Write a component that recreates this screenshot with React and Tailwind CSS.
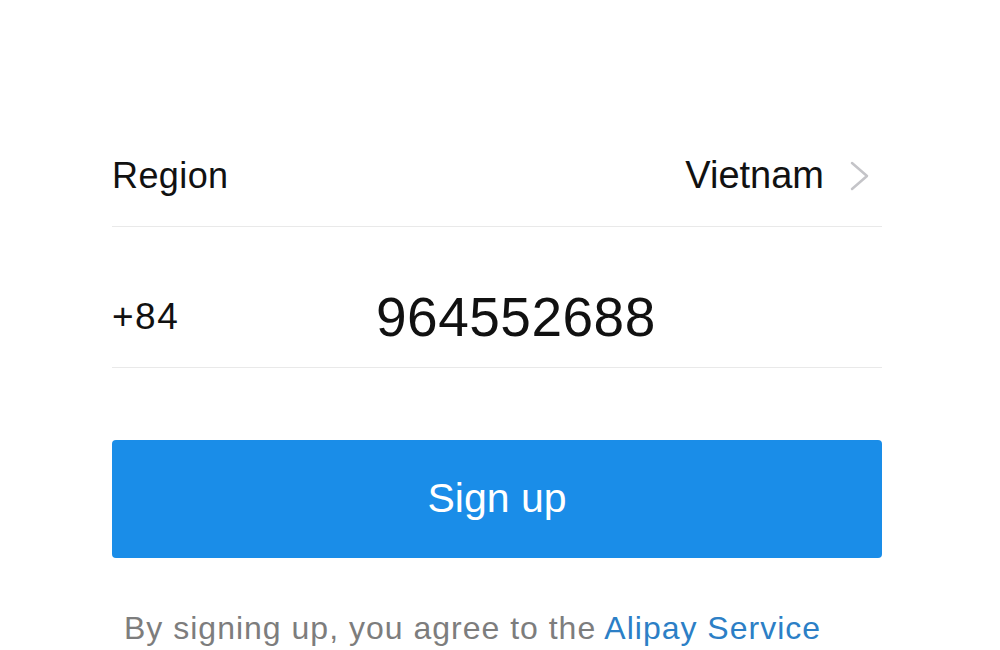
import React from "react";

const Chevron = () => (
  <svg width="24" height="32" viewBox="0 0 24 32" fill="none" className="ml-6">
    <path d="M4 3 L19 16 L4 29" stroke="#c4c4c8" strokeWidth="2.5" strokeLinecap="round" strokeLinejoin="round" />
  </svg>
);

const App = () => {
  return (
    <div
      className="w-[1000px] h-[650px] bg-white overflow-hidden text-[#111]"
      style={{ fontFamily: '"Liberation Sans", Arial, sans-serif' }}
    >
      <div className="ml-[112px] w-[770px] pt-[125px] flex flex-col">
        {/* Region row */}
        <div className="h-[102px] flex items-center justify-between border-b border-[#e9e9e9]">
          <span className="text-[36px] tracking-[0.4px]">Region</span>
          <div className="flex items-center pr-[10px]">
            <span className="text-[38px]">Vietnam</span>
            <Chevron />
          </div>
        </div>

        {/* Phone row */}
        <div className="mt-[40px] h-[101px] flex items-center border-b border-[#e9e9e9]">
          <span className="w-[264px] text-[37px] tracking-[1.5px]">+84</span>
          <span className="text-[55px] tracking-[0.5px]">964552688</span>
        </div>

        {/* Sign up button */}
        <button className="mt-[72px] h-[118px] w-full rounded-[4px] bg-[#1a8de8] text-white text-[41px]">
          Sign up
        </button>

        {/* Terms */}
        <p className="mt-[52px] pl-[12px] text-[32px] tracking-[1px] leading-[36px] text-[#7d7d7d] whitespace-nowrap">
          By signing up, you agree to the{" "}
          <span className="text-[#2c7fc6]">Alipay Service</span>
        </p>
      </div>
    </div>
  );
};

export default App;
